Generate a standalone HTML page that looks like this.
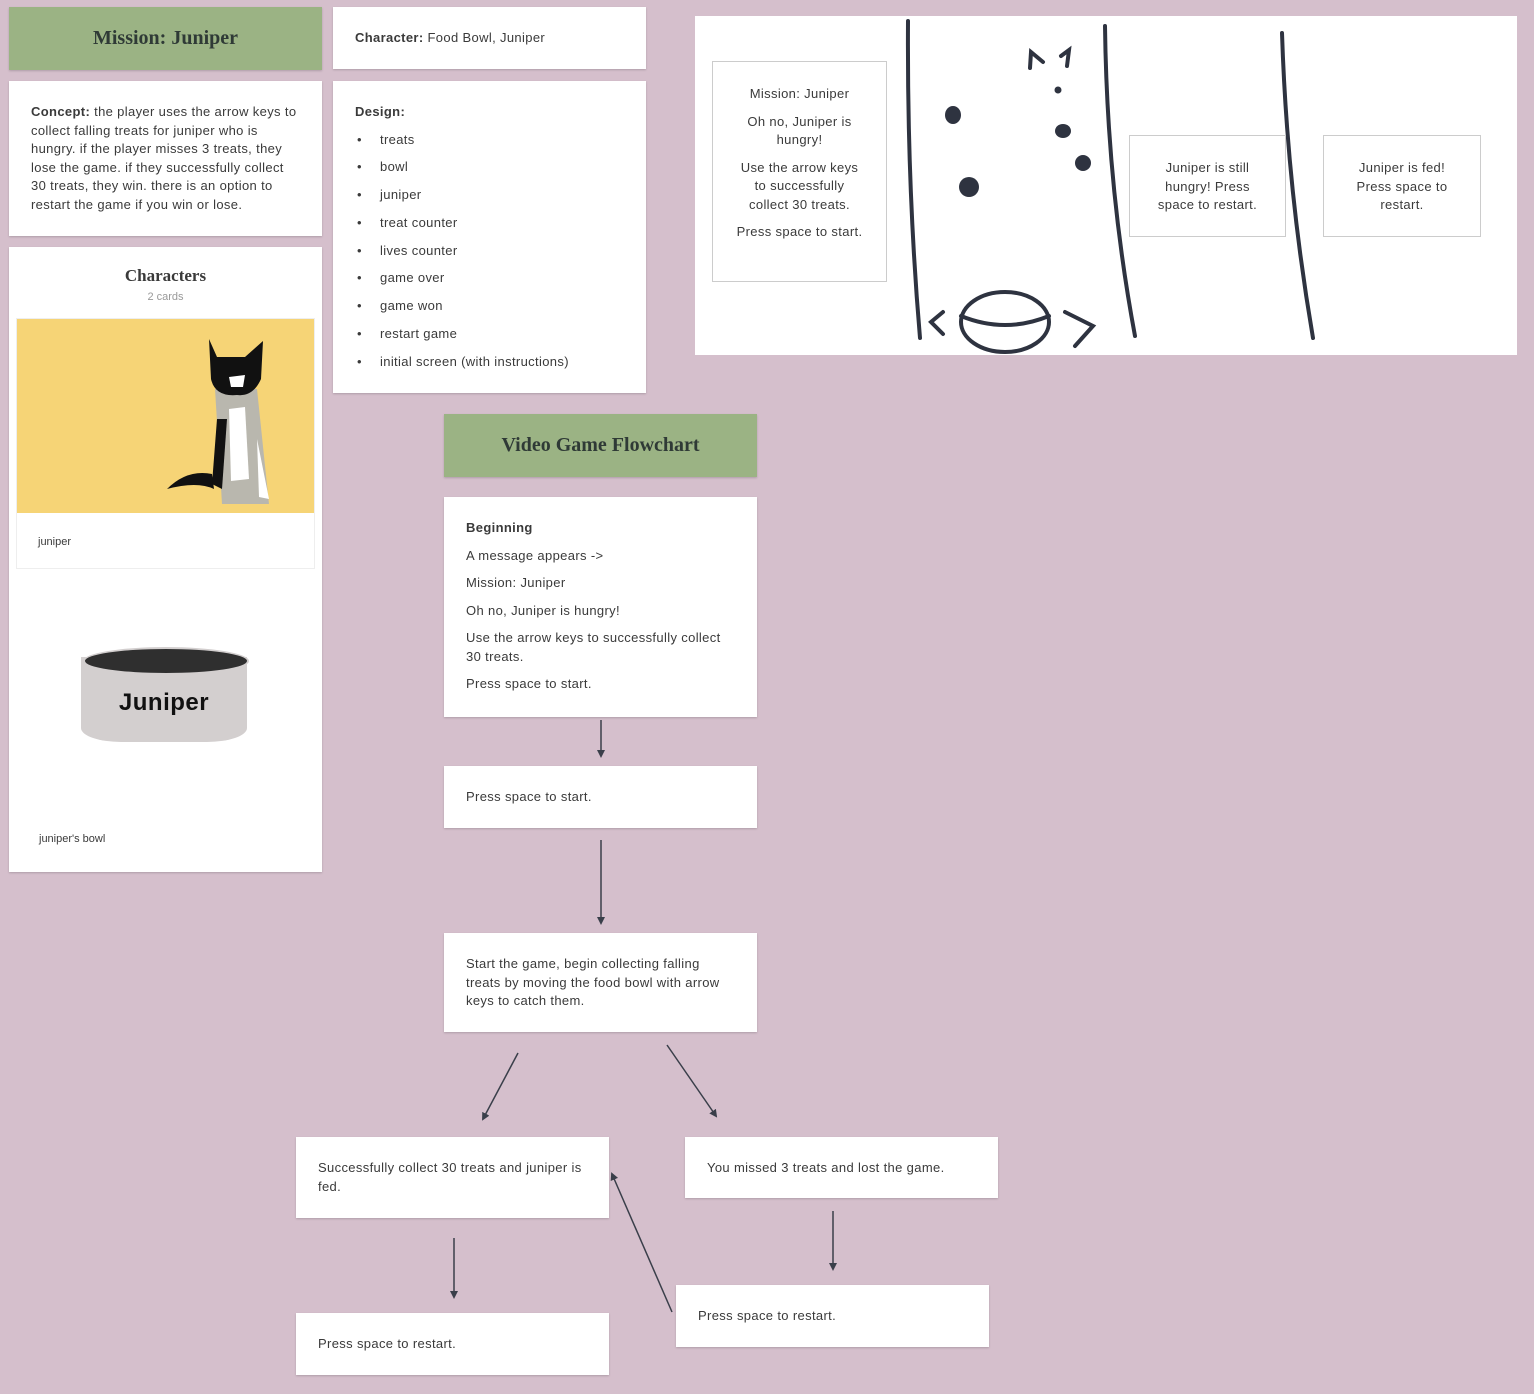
<!DOCTYPE html>
<html><head><meta charset="utf-8"><style>
body{margin:0;width:1534px;height:1394px;background:#d5bfcc;font-family:"Liberation Sans",sans-serif;color:#3a3a3a;position:relative;overflow:hidden}
.c{position:absolute;background:#fff;box-shadow:0 1px 2px rgba(0,0,0,.18);box-sizing:border-box;font-size:13px;line-height:18.5px;letter-spacing:.35px}
.g{background:#9bb384;text-align:center;font-family:"Liberation Serif",serif;font-weight:bold;font-size:20px;color:#2f3a36;letter-spacing:0}
.p{padding:0 22px}
ul{margin:0;padding:0;list-style:none}
li{position:relative;padding-left:25px;height:27.8px}
li:before{content:"•";position:absolute;left:2px}
.s{position:absolute;background:#fff;border:1px solid #ccc;box-sizing:border-box;text-align:center;font-size:13px;line-height:18.5px;letter-spacing:.35px}
</style></head><body>
<div class="c g" style="left:9px;top:7px;width:313px;height:63px;line-height:63px">Mission: Juniper</div>
<div class="c p" style="left:333px;top:7px;width:313px;height:62px;padding-top:22px"><b>Character:</b> Food Bowl, Juniper</div>
<div class="c p" style="left:9px;top:81px;width:313px;height:155px;padding-top:22px"><b>Concept:</b> the player uses the arrow keys to collect falling treats for juniper who is hungry. if the player misses 3 treats, they lose the game. if they successfully collect 30 treats, they win. there is an option to restart the game if you win or lose.</div>
<div class="c p" style="left:333px;top:81px;width:313px;height:312px;padding-top:22px"><b>Design:</b><ul style="margin-top:9px">
<li>treats</li><li>bowl</li><li>juniper</li><li>treat counter</li><li>lives counter</li><li>game over</li><li>game won</li><li>restart game</li><li>initial screen (with instructions)</li></ul></div>
<div class="c" style="left:9px;top:247px;width:313px;height:625px;letter-spacing:0">
<div style="text-align:center;font-family:'Liberation Serif',serif;font-weight:bold;font-size:17px;margin-top:20px">Characters</div>
<div style="text-align:center;font-size:11px;color:#999;margin-top:2px">2 cards</div>
<div style="position:absolute;left:7px;top:71px;width:299px;height:251px;border:1px solid #eee;box-sizing:border-box">
<div style="height:194px;background:#f6d476;position:relative">
<svg width="298" height="194" viewBox="0 0 298 194">
<path d="M150 170 Q170 150 195 155 L197 170 Q180 162 150 170Z" fill="#111"/>
<path d="M198 70 L240 70 L252 185 L205 185Z" fill="#b9b7ae"/>
<path d="M212 90 L228 88 L232 160 L214 162Z" fill="#fff"/>
<path d="M200 100 L210 100 L205 170 L195 165Z" fill="#111"/>
<path d="M240 120 L252 180 L242 178Z" fill="#fff"/>
<path d="M192 20 L200 38 L228 38 L246 22 L244 60 Q236 78 220 76 Q198 78 194 60Z" fill="#111"/>
<path d="M212 58 L228 56 L226 68 L214 68Z" fill="#fff"/>
</svg></div>
<div style="font-size:11px;padding:20px 0 0 21px">juniper</div></div>
<div style="position:absolute;left:72px;top:400px;width:166px;height:95px">
<div style="position:absolute;left:0;top:10px;width:166px;height:85px;background:#d3cfcf;border-radius:0 0 40px 40px/0 0 14px 14px"></div>
<div style="position:absolute;left:2px;top:0;width:162px;height:24px;background:#2f2f2f;border-radius:50%;border:2px solid #d3cfcf"></div>
<div style="position:absolute;left:0;top:47px;width:166px;text-align:center;font-size:24px;color:#111;font-weight:bold;letter-spacing:.5px">Juniper</div></div>
<div style="position:absolute;left:30px;top:583px;font-size:11px">juniper's bowl</div>
</div>
<div class="c" style="left:695px;top:16px;width:822px;height:339px;box-shadow:none">
<svg width="822" height="339" style="position:absolute;left:0;top:0" fill="none" stroke="#2e3340" stroke-width="4" stroke-linecap="round">
<path d="M213 5 Q212 170 225 322"/><path d="M410 10 Q412 170 440 320"/><path d="M587 17 Q592 170 618 322"/>
<path d="M248 296 L236 306 L248 318"/><path d="M370 296 L398 310 L380 330"/>
<ellipse cx="310" cy="306" rx="44" ry="30"/><path d="M266 300 Q310 318 354 300"/>
<path d="M335 52 L336 36 L348 46"/><path d="M372 50 L374 34 L366 40"/>
</svg>
<svg width="822" height="339" style="position:absolute;left:0;top:0" fill="#2e3340">
<ellipse cx="258" cy="99" rx="8" ry="9"/><ellipse cx="368" cy="115" rx="8" ry="7"/><circle cx="388" cy="147" r="8"/><ellipse cx="274" cy="171" rx="10" ry="10"/><circle cx="363" cy="74" r="3.5"/>
</svg>
<div class="s" style="left:17px;top:45px;width:175px;height:221px;padding:23px 24px 0">Mission: Juniper<div style="height:9px"></div>Oh no, Juniper is hungry!<div style="height:9px"></div>Use the arrow keys to successfully collect 30 treats.<div style="height:9px"></div><span style="white-space:nowrap;margin:0 -10px">Press space to start.</span></div>
<div class="s" style="left:434px;top:119px;width:157px;height:102px;padding:23px 22px 0">Juniper is still hungry! Press space to restart.</div>
<div class="s" style="left:628px;top:119px;width:158px;height:102px;padding:23px 22px 0">Juniper is fed! Press space to restart.</div>
</div>
<div class="c g" style="left:444px;top:414px;width:313px;height:63px;line-height:63px">Video Game Flowchart</div>
<div class="c p" style="left:444px;top:497px;width:313px;height:220px;padding-top:22px"><b>Beginning</b><div style="height:9px"></div>A message appears -&gt;<div style="height:9px"></div>Mission: Juniper<div style="height:9px"></div>Oh no, Juniper is hungry!<div style="height:9px"></div>Use the arrow keys to successfully collect 30 treats.<div style="height:9px"></div>Press space to start.</div>
<div class="c p" style="left:444px;top:766px;width:313px;height:62px;padding-top:22px">Press space to start.</div>
<div class="c p" style="left:444px;top:933px;width:313px;height:99px;padding-top:22px">Start the game, begin collecting falling treats by moving the food bowl with arrow keys to catch them.</div>
<div class="c p" style="left:296px;top:1137px;width:313px;height:81px;padding-top:22px">Successfully collect 30 treats and juniper is fed.</div>
<div class="c p" style="left:685px;top:1137px;width:313px;height:61px;padding-top:22px">You missed 3 treats and lost the game.</div>
<div class="c p" style="left:676px;top:1285px;width:313px;height:62px;padding-top:22px">Press space to restart.</div>
<div class="c p" style="left:296px;top:1313px;width:313px;height:62px;padding-top:22px">Press space to restart.</div>
<svg width="1534" height="1394" style="position:absolute;left:0;top:0;pointer-events:none" stroke="#3a3f4a" stroke-width="1.5" fill="#3a3f4a">
<defs><marker id="a" markerWidth="8" markerHeight="8" refX="6" refY="4" orient="auto" markerUnits="userSpaceOnUse"><path d="M0 0 L8 4 L0 8Z" stroke="none"/></marker></defs>
<line x1="601" y1="720" x2="601" y2="756" marker-end="url(#a)"/>
<line x1="601" y1="840" x2="601" y2="923" marker-end="url(#a)"/>
<line x1="518" y1="1053" x2="483" y2="1119" marker-end="url(#a)"/>
<line x1="667" y1="1045" x2="716" y2="1116" marker-end="url(#a)"/>
<line x1="833" y1="1211" x2="833" y2="1269" marker-end="url(#a)"/>
<line x1="454" y1="1238" x2="454" y2="1297" marker-end="url(#a)"/>
<line x1="672" y1="1312" x2="612" y2="1174" marker-end="url(#a)"/>
</svg>
</body></html>
